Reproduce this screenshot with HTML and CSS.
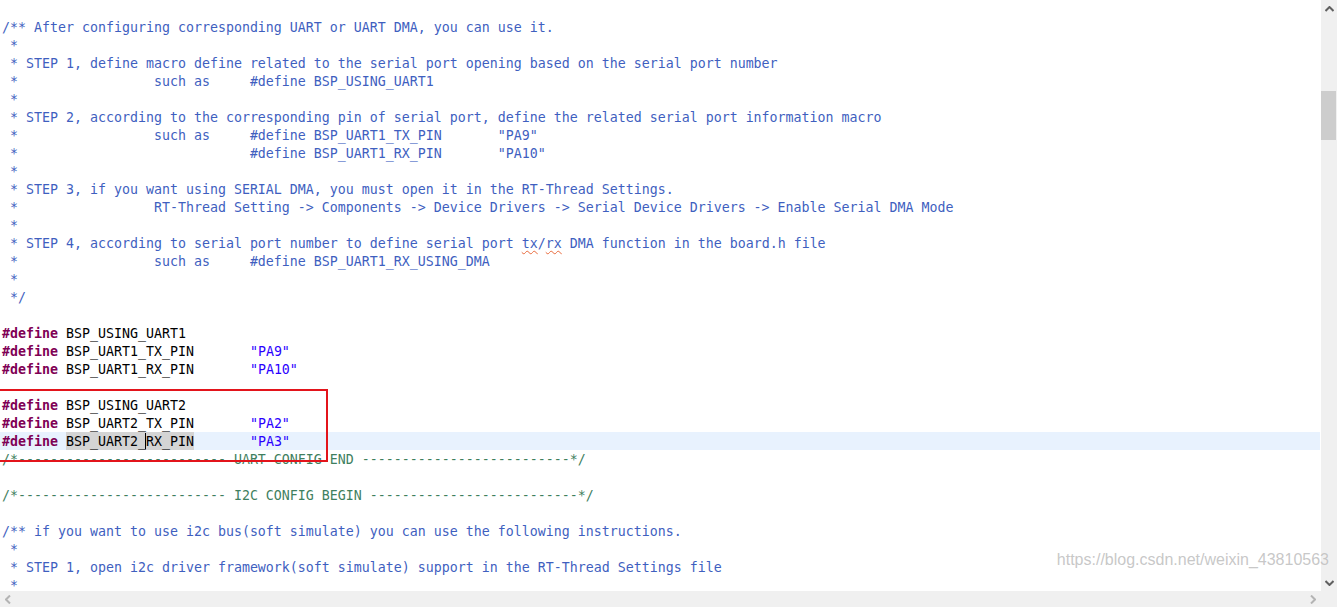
FILE: index.html
```html
<!DOCTYPE html>
<html lang="en">
<head>
  <meta charset="UTF-8" />
  <title>drv_usart.h - board.h</title>
  <link rel="stylesheet" href="styles.css">
</head>
<body>

<div class="editor">
  <div class="main">
    <!-- Code area -->
    <div class="code">
      <div class="line"> </div>
      <div class="line jd">/** After configuring corresponding UART or UART DMA, you can use it.</div>
      <div class="line jd"> *</div>
      <div class="line jd"> * STEP 1, define macro define related to the serial port opening based on the serial port number</div>
      <div class="line jd"> *                 such as     #define BSP_USING_UART1</div>
      <div class="line jd"> *</div>
      <div class="line jd"> * STEP 2, according to the corresponding pin of serial port, define the related serial port information macro</div>
      <div class="line jd"> *                 such as     #define BSP_UART1_TX_PIN       "PA9"</div>
      <div class="line jd"> *                             #define BSP_UART1_RX_PIN       "PA10"</div>
      <div class="line jd"> *</div>
      <div class="line jd"> * STEP 3, if you want using SERIAL DMA, you must open it in the RT-Thread Settings.</div>
      <div class="line jd"> *                 RT-Thread Setting -&gt; Components -&gt; Device Drivers -&gt; Serial Device Drivers -&gt; Enable Serial DMA Mode</div>
      <div class="line jd"> *</div>
      <div class="line jd"> * STEP 4, according to serial port number to define serial port <span class="typo">tx</span>/<span class="typo">rx</span> DMA function in the board.h file</div>
      <div class="line jd"> *                 such as     #define BSP_UART1_RX_USING_DMA</div>
      <div class="line jd"> *</div>
      <div class="line jd"> */</div>
      <div class="line"> </div>
      <div class="line"><span class="kw">#define</span> BSP_USING_UART1</div>
      <div class="line"><span class="kw">#define</span> BSP_UART1_TX_PIN       <span class="st">"PA9"</span></div>
      <div class="line"><span class="kw">#define</span> BSP_UART1_RX_PIN       <span class="st">"PA10"</span></div>
      <div class="line"> </div>
      <div class="line"><span class="kw">#define</span> BSP_USING_UART2</div>
      <div class="line"><span class="kw">#define</span> BSP_UART2_TX_PIN       <span class="st">"PA2"</span></div>
      <div class="line current"><span class="kw">#define</span> <span class="occ">BSP_UART2_</span><span class="caret"></span><span class="occ">RX_PIN</span>       <span class="st">"PA3"</span></div>
      <div class="line cm">/*-------------------------- UART CONFIG END --------------------------*/</div>
      <div class="line"> </div>
      <div class="line cm">/*-------------------------- I2C CONFIG BEGIN --------------------------*/</div>
      <div class="line"> </div>
      <div class="line jd">/** if you want to use i2c bus(soft simulate) you can use the following instructions.</div>
      <div class="line jd"> *</div>
      <div class="line jd"> * STEP 1, open i2c driver framework(soft simulate) support in the RT-Thread Settings file</div>
      <div class="line jd"> *</div>
    </div>

    <!-- Vertical scrollbar -->
    <div class="vscroll">
      <div class="sb-btn">
        <svg width="9" height="6" viewBox="0 0 9 6"><path d="M0.5 5 L4.5 1 L8.5 5" fill="none" stroke="#606060" stroke-width="2"/></svg>
      </div>
      <div class="vtrack">
        <div class="vthumb"></div>
      </div>
      <div class="sb-btn">
        <svg width="9" height="6" viewBox="0 0 9 6"><path d="M0.5 1 L4.5 5 L8.5 1" fill="none" stroke="#606060" stroke-width="2"/></svg>
      </div>
    </div>
  </div>

  <!-- Horizontal scrollbar -->
  <div class="hscroll">
    <div class="sb-btn">
      <svg width="6" height="9" viewBox="0 0 6 9"><path d="M5 0.5 L1 4.5 L5 8.5" fill="none" stroke="#b4b4b4" stroke-width="2"/></svg>
    </div>
    <div class="htrack"></div>
    <div class="sb-btn">
      <svg width="6" height="9" viewBox="0 0 6 9"><path d="M1 0.5 L5 4.5 L1 8.5" fill="none" stroke="#b4b4b4" stroke-width="2"/></svg>
    </div>
    <div class="corner"></div>
  </div>

  <!-- Markup overlays -->
  <div class="red-box"></div>
  <div class="watermark">https://blog.csdn.net/weixin_43810563</div>
</div>

</body>
</html>
```

FILE: styles.css
```css
body {
  margin: 0;
  padding: 0;
  background: #fff;
  overflow: hidden;
}

.editor {
  position: relative;
  width: 1337px;
  height: 607px;
  display: flex;
  flex-direction: column;
  overflow: hidden;
}

.main {
  flex: 1;
  display: flex;
  min-height: 0;
}

.code {
  flex: 1;
  overflow: hidden;
  font-family: "DejaVu Sans Mono", "Liberation Mono", monospace;
  font-size: 13.29px;
  color: #000;
}

.line {
  height: 17px;
  padding-top: 1px;
  line-height: 18px;
  padding-left: 2px;
  white-space: pre;
  margin-right: 1px;
}

.line.current {
  background: #e8f2fe;
}

.jd {
  color: #3f5fbf;
}

.cm {
  color: #3f7f5f;
}

.kw {
  color: #7f0055;
  font-weight: bold;
}

.st {
  color: #2a00ff;
}

.occ {
  background: #d4d4d4;
  display: inline-block;
  height: 17px;
  padding-top: 1px;
  margin-top: -1px;
  line-height: 18px;
  vertical-align: top;
}

.caret {
  display: inline-block;
  width: 0;
  height: 16px;
  border-left: 1px solid #000;
  margin-left: -1px;
  vertical-align: top;
}

.typo {
  text-decoration: underline wavy #e86a3c;
  text-decoration-thickness: 1px;
  text-underline-offset: 2px;
}

/* Scrollbars */
.vscroll {
  width: 16px;
  display: flex;
  flex-direction: column;
  background: #f0f0f0;
}

.sb-btn {
  width: 16px;
  height: 17px;
  display: flex;
  align-items: center;
  justify-content: center;
  flex-shrink: 0;
}

.vtrack {
  flex: 1;
  padding-top: 74px;
}

.vthumb {
  width: 15px;
  height: 49px;
  background: #cdcdcd;
}

.hscroll {
  height: 16px;
  display: flex;
  background: #f0f0f0;
}

.hscroll .sb-btn {
  height: 16px;
}

.htrack {
  flex: 1;
}

.corner {
  width: 16px;
}

.red-box {
  position: absolute;
  left: -2px;
  top: 389px;
  width: 326px;
  height: 69px;
  border: 2px solid #e3141b;
  pointer-events: none;
}

.watermark {
  position: absolute;
  right: 8px;
  top: 551px;
  font-family: "Liberation Sans", Arial, sans-serif;
  font-size: 16px;
  color: rgba(185, 185, 185, 0.8);
  text-shadow: 0 0 1px rgba(255, 255, 255, 0.6);
  pointer-events: none;
}
```
